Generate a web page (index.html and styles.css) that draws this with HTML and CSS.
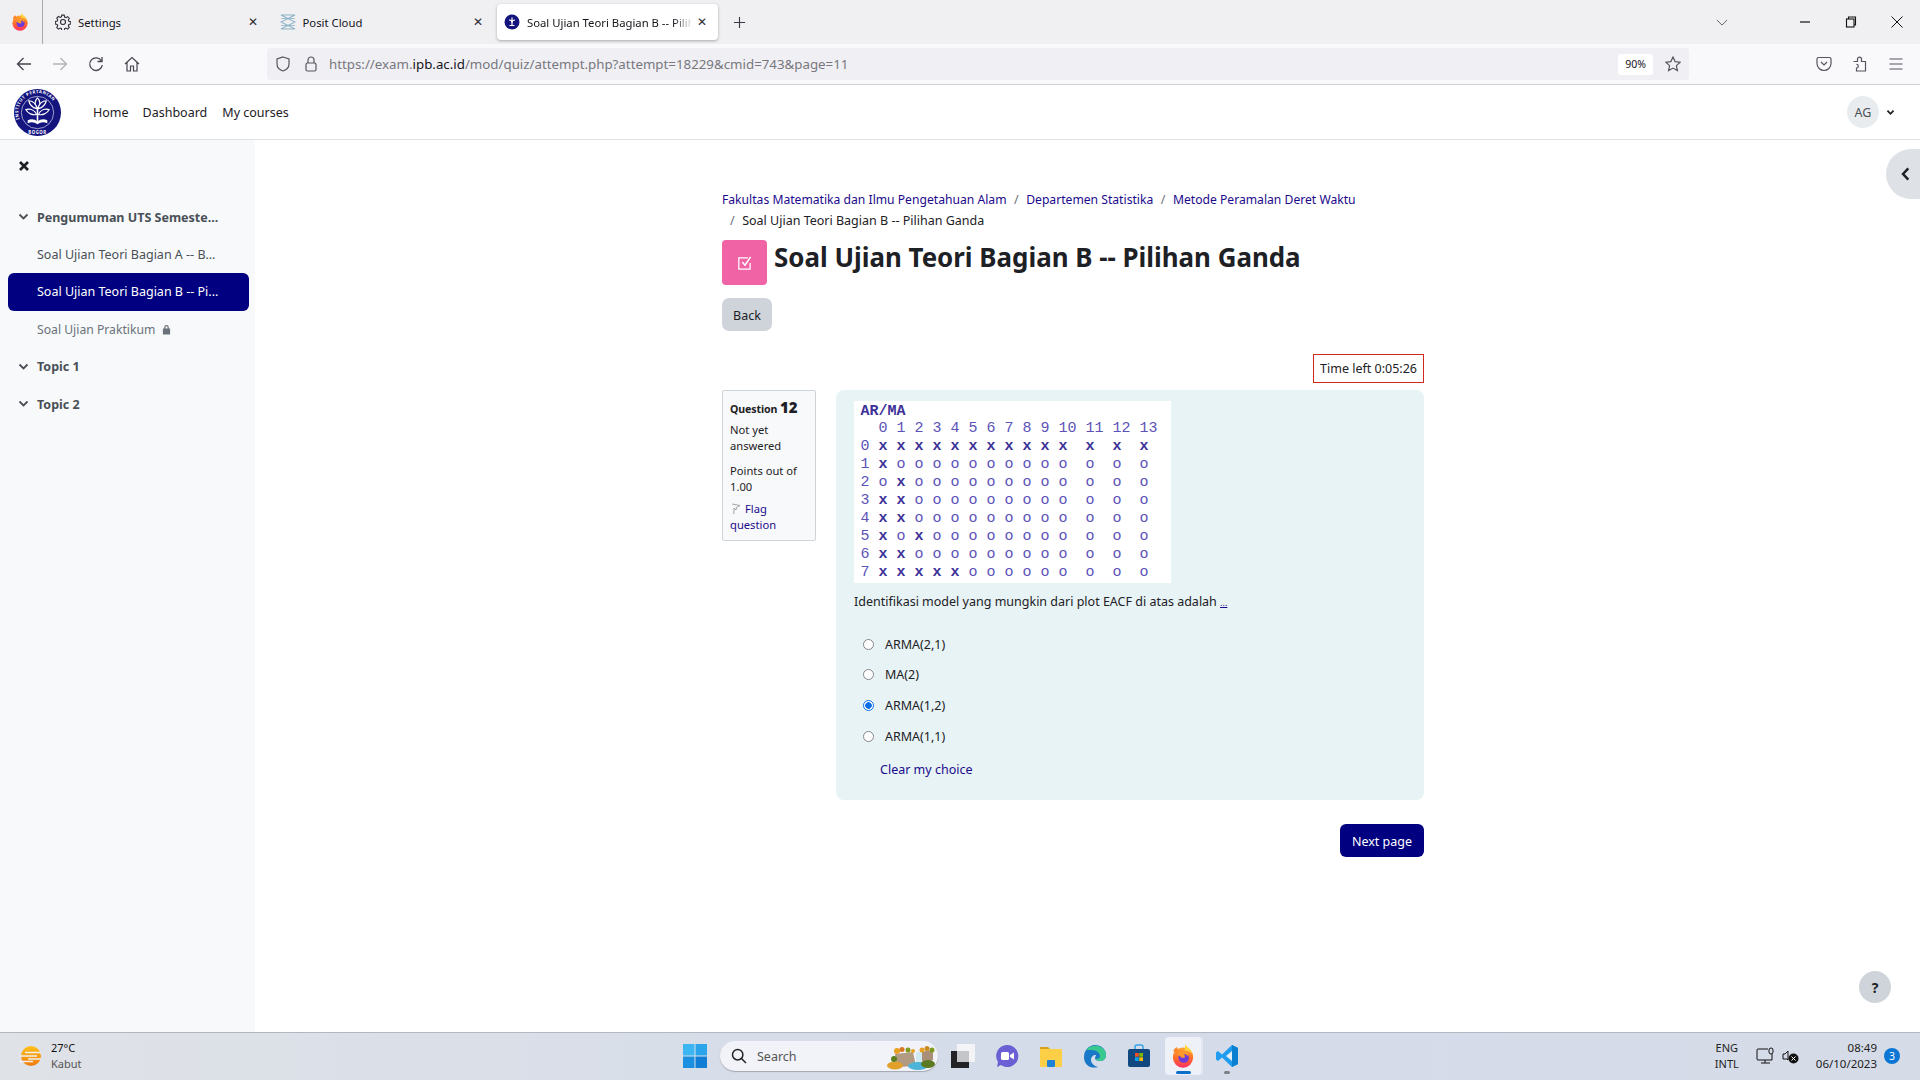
FILE: index.html
```html
<!DOCTYPE html>
<html lang="en">
<head>
<meta charset="utf-8">
<title>Soal Ujian Teori Bagian B -- Pilihan Ganda</title>
<link rel="stylesheet" href="styles.css">
</head>
<body>
<svg class="defs" aria-hidden="true">
  <defs>
    <linearGradient id="ffg" x1="0" y1="0" x2="0" y2="1"><stop offset="0" stop-color="#ffa930"/><stop offset=".55" stop-color="#ff6a2c"/><stop offset="1" stop-color="#ff2f63"/></linearGradient>
    <linearGradient id="sung" x1="0" y1="0" x2="0" y2="1"><stop offset="0" stop-color="#ffc21a"/><stop offset="1" stop-color="#ee7a0c"/></linearGradient>
    <symbol id="fox" viewBox="0 0 32 32">
      <path d="M19 0c1 4 5 5 7 8 3 4 4 8 3 12-3-5-6-8-11-9z" fill="#ffd23c"/>
      <circle cx="16" cy="18" r="13.500" fill="url(#ffg)"/>
      <path d="M19 1c1 3 4 5 6 7 2 2 3 4 4 6-3-4-7-5-11-5z" fill="#ffd23c"/>
      <circle cx="17" cy="18" r="7" fill="#6f3bd8"/>
      <path d="M9 14c2-3 6-5 10-4 3 1 5 4 4 7-1-3-4-4-6-3 2 1 2 3 1 4-2 1-6 0-6-2-1 0-2-1-3-2z" fill="#ff9a2c"/>
      <path d="M3 9c1-2 3-4 5-5 0 2 1 3 3 4-2 1-3 3-2 5-3 0-5-2-6-4z" fill="#ff8a2c"/>
    </symbol>
  </defs>
</svg>

<div class="tabstrip">
  <svg class="ff-small"><use href="#fox"/></svg>
  <div class="tab-sep"></div>
  <div class="tab">
    <svg class="tab-ico" viewBox="0 0 16 16" fill="none" stroke="#2b2a33" stroke-width="1.100"><path d="M6.700 1h2.600l.4 2 1.400.6 1.800-1.100 1.800 1.800-1.100 1.800.6 1.400 2 .4v2.600l-2 .4-.6 1.400 1.100 1.800-1.800 1.800-1.800-1.100-1.400.6-.4 2H6.700l-.4-2-1.400-.6-1.800 1.100-1.800-1.800 1.100-1.800-.6-1.400-2-.4V7.700l2-.4.6-1.400-1.100-1.800 1.800-1.800 1.800 1.100 1.400-.6z" transform="translate(.5 .2) scale(.94)"/><circle cx="8" cy="8" r="2.500"/></svg>
    <span class="tab-label">Settings</span><span class="tab-x">✕</span>
  </div>
  <div class="tab">
    <svg class="tab-ico" viewBox="0 0 16 16" fill="none" stroke="#8fb2c9" stroke-width="1.100"><path d="M1 1h14L1 8l14 7H1l14-7z"/><path d="M1 4.500h14M1 11.500h14" stroke-width=".8"/></svg>
    <span class="tab-label">Posit Cloud</span><span class="tab-x">✕</span>
  </div>
  <div class="tab tab-active">
    <svg class="tab-ico" viewBox="0 0 16 16"><circle cx="8" cy="8" r="7.500" fill="#14147f"/><path d="M8 3.500v8M5 6c2 0 3 1.500 3 3 0-1.500 1-3 3-3M5.500 11.500h5" stroke="#fff" stroke-width="1.200" fill="none"/></svg>
    <span class="tab-label tab-fade">Soal Ujian Teori Bagian B -- Pilihan Ganda</span><span class="tab-x">✕</span>
  </div>
  <svg class="plus" viewBox="0 0 14 14" stroke="#3a3944" stroke-width="1.200"><path d="M7 1v12M1 7h12"/></svg>
  <svg class="tablist" viewBox="0 0 14 8" fill="none" stroke="#5b5b66" stroke-width="1.100"><path d="M1 1l6 6 6-6"/></svg>
  <div class="winctl">
    <svg viewBox="0 0 12 12" stroke="#111" stroke-width="1.200"><path d="M1 6h10"/></svg>
    <svg viewBox="0 0 12 12" fill="none" stroke="#111" stroke-width="1.100"><rect x="1.500" y="3" width="7.500" height="8"/><path d="M3.500 3V1h7v8H9"/></svg>
    <svg viewBox="0 0 12 12" stroke="#111" stroke-width="1"><path d="M.5.500l11 11M11.500.500l-11 11"/></svg>
  </div>
</div>

<div class="toolbar">
  <div class="tool"><svg viewBox="0 0 16 16" fill="none" stroke="#45454f" stroke-width="1.300"><path d="M15 8H1.500M7.500 2l-6 6 6 6"/></svg></div>
  <div class="tool"><svg viewBox="0 0 16 16" fill="none" stroke="#b3b3b8" stroke-width="1.300"><path d="M1 8h13.500M8.500 2l6 6-6 6"/></svg></div>
  <div class="tool"><svg viewBox="0 0 16 16" fill="none" stroke="#45454f" stroke-width="1.300"><path d="M13.500 5A6.300 6.300 0 1 0 14.300 9M14 1v4.500H9.500"/></svg></div>
  <div class="tool"><svg viewBox="0 0 16 16" fill="none" stroke="#45454f" stroke-width="1.200"><path d="M1 8l7-6.500L15 8M3 6.500V15h3.500v-5h3v5H13V6.500"/></svg></div>
  <div class="urlbar">
    <svg class="url-ico" viewBox="0 0 16 16" fill="none" stroke="#55555f" stroke-width="1.200"><path d="M8 1l6 2v5c0 3.500-3 6-6 7-3-1-6-3.500-6-7V3z"/></svg>
    <svg class="url-ico" viewBox="0 0 16 16" fill="none" stroke="#55555f" stroke-width="1.200"><rect x="3" y="7" width="10" height="8" rx="1.500"/><path d="M5 7V4a3 3 0 0 1 6 0v3"/></svg>
    <div class="url"><span class="url-dim">https://exam.</span>ipb.ac.id<span class="url-dim">/mod/quiz/attempt.php?attempt=18229&amp;cmid=743&amp;page=11</span></div>
    <div class="zoomchip">90%</div>
    <svg class="star" viewBox="0 0 16 16" fill="none" stroke="#55555f" stroke-width="1.200"><path d="M8 1l2.100 4.600 5 .6-3.700 3.400 1 5L8 12.100 3.600 14.600l1-5L.9 6.200l5-.6z"/></svg>
  </div>
  <div class="tools-right">
    <svg viewBox="0 0 16 16" fill="none" stroke="#55555f" stroke-width="1.200"><path d="M2.500 1.500h11A1.500 1.500 0 0 1 15 3v4.500c0 4-3.300 7-7 7s-7-3-7-7V3a1.500 1.500 0 0 1 1.500-1.500z"/><path d="M5 6l3 3 3-3"/></svg>
    <svg viewBox="0 0 16 16" fill="none" stroke="#55555f" stroke-width="1.200"><path d="M1.500 5.500h4V3.200a2 2 0 1 1 4 0v2.300h4v9.500h-9v-3a1.800 1.800 0 1 0 0-3.600"/></svg>
    <svg viewBox="0 0 16 16" fill="none" stroke="#55555f" stroke-width="1.200"><path d="M1.500 3h13M1.500 8h13M1.500 13h13"/></svg>
  </div>
</div>

<nav class="navbar">
  <svg class="logo" viewBox="0 0 48 48">
    <circle cx="24" cy="24" r="24" fill="#14147f"/>
    <circle cx="24" cy="24" r="16.500" fill="none" stroke="#fff" stroke-width=".6"/>
    <g fill="#14147f" stroke="#fff" stroke-width="1.200" stroke-linejoin="round">
      <path d="M24 9c-3 3-3 7 0 10.500 3-3.500 3-7.500 0-10.500z"/>
      <path d="M23 20c-4-1-7-4-8-8 4 0 8 3 8 8z"/>
      <path d="M25 20c4-1 7-4 8-8-4 0-8 3-8 8z"/>
      <path d="M23 26c-4 1-9-1-11-5 4-1 9 0 11 5z"/>
      <path d="M25 26c4 1 9-1 11-5-4-1-9 0-11 5z"/>
    </g>
    <path d="M24 19v14" stroke="#fff" stroke-width="1.600"/>
    <path d="M14 32c4-2 7-1 10 1 3-2 6-3 10-1v3c-4-2-7-1-10 1-3-2-6-3-10-1z" fill="#fff"/>
    <path id="ringpath" d="M6.500 33A19.700 19.700 0 1 1 41.500 33" fill="none"/>
    <text class="logo-ring"><textPath href="#ringpath" startOffset="3%">INSTITUT PERTANIAN</textPath></text>
    <text class="logo-ring" x="24" y="46" text-anchor="middle">BOGOR</text>
  </svg>
  <a class="navlink">Home</a>
  <a class="navlink">Dashboard</a>
  <a class="navlink nav-last">My courses</a>
  <div class="user">
    <div class="avatar">AG</div>
    <svg class="caret" viewBox="0 0 10 8" fill="none" stroke="#1d2125" stroke-width="2"><path d="M1.500 1.800L5 5.500l3.500-3.700"/></svg>
  </div>
</nav>

<div class="main">
  <aside class="sidebar">
    <div class="closerow"><svg class="close-ico" viewBox="0 0 10 10" stroke="#1d2125" stroke-width="2.600"><path d="M1 1l8 8M9 1l-8 8"/></svg></div>
    <div class="side-row side-head"><svg class="chev" viewBox="0 0 10 8" fill="none" stroke="#495057" stroke-width="1.800"><path d="M1 1.500L5 5.500l4-4"/></svg>Pengumuman UTS Semeste...</div>
    <div class="side-row side-item">Soal Ujian Teori Bagian A -- B...</div>
    <div class="side-row side-item side-active">Soal Ujian Teori Bagian B -- Pi...</div>
    <div class="side-row side-item side-muted">Soal Ujian Praktikum<svg class="lock" viewBox="0 0 10 12"><path d="M2.500 5V3.500a2.500 2.500 0 0 1 5 0V5H9v6.500H1V5zM3.800 5h2.400V3.500a1.200 1.200 0 0 0-2.400 0z" fill="#6a737b" fill-rule="evenodd"/></svg></div>
    <div class="side-row side-head"><svg class="chev" viewBox="0 0 10 8" fill="none" stroke="#495057" stroke-width="1.800"><path d="M1 1.500L5 5.500l4-4"/></svg>Topic 1</div>
    <div class="side-row side-head"><svg class="chev" viewBox="0 0 10 8" fill="none" stroke="#495057" stroke-width="1.800"><path d="M1 1.500L5 5.500l4-4"/></svg>Topic 2</div>
  </aside>

  <main class="content">
    <div class="crumbs">
      <a>Fakultas Matematika dan Ilmu Pengetahuan Alam</a><span class="sep">/</span><a>Departemen Statistika</a><span class="sep">/</span><a>Metode Peramalan Deret Waktu</a><br>
      <span class="sep sep-first">/</span>Soal Ujian Teori Bagian B -- Pilihan Ganda
    </div>
    <div class="titlerow">
      <div class="quiz-ico"><svg viewBox="0 0 16 16" fill="none" stroke="#fff" stroke-width="1.100"><path d="M12.500 8v5.500h-10v-10h8"/><path d="M5.500 7l2.500 3 5-7.500" stroke-width="1.300"/></svg></div>
      <h1>Soal Ujian Teori Bagian B -- Pilihan Ganda</h1>
    </div>
    <div class="backbtn">Back</div>
    <div class="timerrow"><div class="timer">Time left 0:05:26</div></div>
    <div class="question">
      <div class="qinfo">
        <div class="qno">Question <b>12</b></div>
        <p>Not yet answered</p>
        <p>Points out of 1.00</p>
        <p class="flag"><svg class="flag-ico" viewBox="0 0 10 12" fill="none" stroke="#8a8f94" stroke-width=".8"><path d="M1 1l8 1.500L5.500 4.500 5 7 3 5 2.800 11"/></svg><a>Flag question</a></p>
      </div>
      <div class="qbody">
        <div class="eacf">
          <div class="eacf-row"><b>AR/MA</b></div>
          <div class="eacf-row">  0 1 2 3 4 5 6 7 8 9 10 11 12 13</div>
          <div class="eacf-row">0 <b>x x x x x x x x x x x  x  x  x</b></div>
          <div class="eacf-row">1 <b>x</b> o o o o o o o o o o  o  o  o</div>
          <div class="eacf-row">2 o <b>x</b> o o o o o o o o o  o  o  o</div>
          <div class="eacf-row">3 <b>x x</b> o o o o o o o o o  o  o  o</div>
          <div class="eacf-row">4 <b>x x</b> o o o o o o o o o  o  o  o</div>
          <div class="eacf-row">5 <b>x</b> o <b>x</b> o o o o o o o o  o  o  o</div>
          <div class="eacf-row">6 <b>x x</b> o o o o o o o o o  o  o  o</div>
          <div class="eacf-row">7 <b>x x x x x</b> o o o o o o  o  o  o</div>
        </div>
        <div class="qtext">Identifikasi model yang mungkin dari plot EACF di atas adalah <a class="dots">...</a></div>
        <div class="answers">
          <div class="ans"><span class="radio"></span>ARMA(2,1)</div>
          <div class="ans"><span class="radio"></span>MA(2)</div>
          <div class="ans"><span class="radio radio-on"></span>ARMA(1,2)</div>
          <div class="ans"><span class="radio"></span>ARMA(1,1)</div>
        </div>
        <a class="clear">Clear my choice</a>
      </div>
    </div>
    <div class="nextrow"><div class="nextbtn">Next page</div></div>
  </main>

  <div class="drawer"><svg viewBox="0 0 8 12" fill="none" stroke="#1d2125" stroke-width="2.200"><path d="M6.500 1L1.800 6l4.700 5"/></svg></div>
  <div class="help">?</div>
</div>

<footer class="taskbar">
  <div class="weather">
    <svg class="sun" viewBox="0 0 24 24"><circle cx="12" cy="12" r="10" fill="url(#sung)"/><path d="M6 8.500h16M1 12h17M9 15h13M0 17.500h14" stroke="#eef0f3" stroke-width="1.300"/></svg>
    <div class="wtext"><div>27°C</div><div class="wsub">Kabut</div></div>
  </div>
  <div class="center">
    <svg class="win" viewBox="0 0 24 24"><rect width="11.500" height="11.500" fill="#3bb6f2"/><rect x="12.500" width="11.500" height="11.500" fill="#2aa5ec"/><rect y="12.500" width="11.500" height="11.500" fill="#1b8fe0"/><rect x="12.500" y="12.500" width="11.500" height="11.500" fill="#0f7ed4"/></svg>
    <div class="search">
      <svg class="search-ico" viewBox="0 0 16 16" fill="none" stroke="#222" stroke-width="1.500"><circle cx="6.700" cy="6.700" r="5.200"/><path d="M10.500 10.500l4.500 4.500"/></svg>
      <span>Search</span>
      <svg class="search-art" viewBox="0 0 50 24">
        <path d="M8 8l18-2 3 14-19 1z" fill="#b39a83"/>
        <path d="M33 6l13-2v10l-10 4z" fill="#a98f78"/>
        <rect x="29" y="6" width="6" height="11" fill="#cfeaf0"/>
        <ellipse cx="31" cy="20" rx="10" ry="4" fill="#4cb4d8"/>
        <ellipse cx="8" cy="19.500" rx="8" ry="4" fill="#e0a02a"/>
        <circle cx="7" cy="13" r="3" fill="#5b7f20"/>
        <ellipse cx="41" cy="18" rx="7" ry="4" fill="#5c7a22"/>
        <circle cx="10" cy="5" r="3" fill="#e8a020"/><circle cx="15" cy="3.500" r="2.500" fill="#d9781f"/><circle cx="21" cy="4" r="2.500" fill="#7f9a1f"/><circle cx="26" cy="5" r="2" fill="#e8a020"/>
        <circle cx="35" cy="4" r="2.500" fill="#e8a020"/><circle cx="40" cy="2.500" r="2.500" fill="#c88a1c"/><circle cx="45" cy="4" r="2.500" fill="#7f9a1f"/>
      </svg>
    </div>
    <div class="slot"><svg viewBox="0 0 24 24"><rect x="6" width="18" height="18" fill="#f4f4f6"/><rect y="7" width="18" height="18" fill="#232325"/><rect x="6" y="7" width="12" height="11" fill="#c3c5c9"/></svg></div>
    <div class="slot"><svg viewBox="0 0 24 24"><path d="M12 1a11 11 0 1 1-6 20l-4 2 1-5A11 11 0 0 1 12 1z" fill="#6a5fd3"/><rect x="6" y="8" width="8" height="8" rx="1.500" fill="#fff"/><path d="M15 11l4-2.500v7L15 13z" fill="#fff"/></svg></div>
    <div class="slot"><svg viewBox="0 0 24 24"><path d="M1 3h8l2 2h-10z" fill="#d9a01a"/><rect x="1" y="5" width="22" height="18" rx="1" fill="#fdcf47"/><rect x="8" y="16" width="8" height="7" rx="1" fill="#1f82d6"/></svg></div>
    <div class="slot"><svg viewBox="0 0 24 24"><path d="M12 1c6 0 11 4 11 10 0 4-3 6-6 6-3 0-5-1-5-3 0-1 1-2 1-3-3 0-5 2-5 5s3 6 7 7c-6 2-14-1-14-10C1 6 6 1 12 1z" fill="#1a78c8"/><path d="M3 6c3-4 8-5 12-4 5 1 8 5 8 9 0 4-3 6-6 6-2 0-4-1-5-2 2 0 5 0 5-3 0-3-4-6-8-6-3 0-5 0-6 0z" fill="#37c98e"/></svg></div>
    <div class="slot"><svg viewBox="0 0 24 24"><path d="M8 5V3a2 2 0 0 1 2-2h4a2 2 0 0 1 2 2v2" fill="none" stroke="#35a4e6" stroke-width="1.500"/><rect x="1" y="5" width="22" height="18" rx="2" fill="#10487f"/><rect x="8" y="9" width="3.700" height="3.700" fill="#f25022"/><rect x="12.300" y="9" width="3.700" height="3.700" fill="#7fba00"/><rect x="8" y="13.300" width="3.700" height="3.700" fill="#00a4ef"/><rect x="12.300" y="13.300" width="3.700" height="3.700" fill="#ffb900"/></svg></div>
    <div class="slot slot-active"><svg><use href="#fox"/></svg><span class="run-bar"></span></div>
    <div class="slot"><svg viewBox="0 0 24 24"><path d="M17 1l6 3v16l-6 3-10-9.500L3 17l-2-1.500V8.500L3 7l4 3.500z" fill="#1f9cf0"/><path d="M17 7l-6 5 6 5z" fill="#e7edf5"/><path d="M17 1l6 3v16l-6 3z" fill="#0b7fd0"/></svg><span class="run-dot"></span></div>
  </div>
  <div class="tray">
    <div class="lang">ENG<br>INTL</div>
    <svg class="tray-ico" viewBox="0 0 18 18" fill="none" stroke="#111" stroke-width="1"><path d="M12 2H2a1 1 0 0 0-1 1v9a1 1 0 0 0 1 1h14v-6M9 13v3M5 16h9"/><rect x="13" y="1" width="4" height="6" rx="2"/></svg>
    <svg class="tray-ico" viewBox="0 0 18 18"><path d="M1 7h2l3-3v9l-1-1H1z" fill="none" stroke="#111"/><circle cx="11.500" cy="11.500" r="5" fill="#111"/><path d="M9.500 9.500l4 4M13.500 9.500l-4 4" stroke="#fff" stroke-width="1"/></svg>
    <div class="clock">08:49<br>06/10/2023</div>
    <div class="badge">3</div>
  </div>
</footer>
</body>
</html>
```
FILE: styles.css
```css
* { box-sizing: border-box; }
html, body { margin: 0; height: 100%; }
body {
  width: 1920px; height: 1080px; overflow: hidden;
  display: flex; flex-direction: column;
  font-family: "Noto Sans", sans-serif; font-size: 12.5px; color: #1d2125; background: #fff;
}
svg { display: block; flex: none; }
.defs { width: 0; height: 0; overflow: hidden; }
a { color: #1c0a8c; }

/* browser chrome */
.tabstrip { height: 44px; flex: none; background: #f0f0f2; display: flex; align-items: center; padding-left: 11px; color: #15141a; }
.ff-small { width: 18px; height: 18px; }
.tab-sep { width: 1px; height: 44px; background: #a8a8ac; margin: 0 5px 0 13px; }
.tab { width: 221px; height: 36px; margin-right: 3.5px; display: flex; align-items: center; padding-left: 7px; padding-right: 9px; border-radius: 4px; font-size: 11.3px; }
.tab-active { background: #fff; box-shadow: 0 1px 3px rgba(0,0,0,.3); }
.tab-ico { width: 16px; height: 16px; margin-right: 7px; }
.tab-label { flex: 1; white-space: nowrap; overflow: hidden; }
.tab-fade { margin-right: 4px; -webkit-mask-image: linear-gradient(90deg,#000 88%,transparent); mask-image: linear-gradient(90deg,#000 88%,transparent); }
.tab-x { font-size: 12px; width: 12px; line-height: 12px; color: #2b2a33; }
.plus { width: 13px; height: 13px; margin-left: 11px; }
.tablist { width: 12px; height: 7px; margin-left: 970px; }
.winctl { margin-left: 71px; display: flex; gap: 34px; }
.winctl svg { width: 12px; height: 12px; }

.toolbar { height: 41px; flex: none; background: #f9f9fb; border-bottom: 1px solid #cfcfd2; display: flex; align-items: center; padding-left: 6px; }
.tool { width: 36px; display: flex; justify-content: center; }
.tool svg { width: 16px; height: 16px; }
.urlbar { margin-left: 117px; width: 1422px; height: 32px; background: #f0f0f4; border-radius: 4px; display: flex; align-items: center; padding-left: 8px; }
.url-ico { width: 16px; height: 16px; margin-right: 12px; }
.url-ico + .url-ico { margin-right: 10px; }
.url { flex: 1; font-size: 13.3px; color: #15141a; white-space: nowrap; }
.url-dim { color: #77777e; }
.zoomchip { width: 35px; height: 21px; background: #fff; border-radius: 3px; font-size: 10.5px; display: flex; align-items: center; justify-content: center; color: #15141a; }
.star { width: 16px; height: 16px; margin: 0 8px 0 12px; }
.tools-right { display: flex; gap: 20px; margin-left: 127px; }
.tools-right svg { width: 16px; height: 16px; }

/* moodle nav */
.navbar { height: 55px; flex: none; border-bottom: 1px solid #dee2e6; display: flex; align-items: center; padding-left: 14px; background: #fff; }
.logo { width: 47px; height: 47px; margin-right: 32px; }
.logo-ring { font-size: 4.400px; font-weight: 700; fill: #fff; font-family: "Noto Sans", sans-serif; letter-spacing: .55px; }
.navlink { color: #1d2125; margin-right: 14px; }
.nav-last { margin-left: 1px; }
.user { margin-left: auto; display: flex; align-items: center; padding-right: 25px; gap: 7px; }
.avatar { width: 32px; height: 32px; border-radius: 50%; background: #e9ecef; display: flex; align-items: center; justify-content: center; color: #495057; }
.caret { width: 9px; height: 7px; }

/* main */
.main { flex: 1; display: flex; position: relative; min-height: 0; }
.sidebar { width: 255px; flex: none; background: #f8f9fa; padding: 0 6px 0 8px; }
.closerow { height: 58.500px; padding: 21px 0 0 11px; }
.close-ico { width: 10px; height: 10px; }
.side-row { height: 37.400px; display: flex; align-items: center; border-radius: 6px; padding-left: 29px; white-space: nowrap; color: #495057; }
.side-head { font-weight: 700; padding-left: 10px; }
.chev { width: 11px; height: 8px; margin-right: 8px; }
.side-active { background: #000080; color: #fff; }
.side-muted { color: #6a737b; font-size: 12.200px; }
.lock { width: 9px; height: 11px; margin-left: 7px; }

.content { flex: none; width: 702px; margin-left: 467px; padding-top: 49px; }
.crumbs { line-height: 21px; height: 42px; white-space: nowrap; }
.crumbs a { font-size: 12.150px; }
.sep { color: #6a737b; margin: 0 7.500px; }
.sep-first { margin-left: 8px; }
.titlerow { display: flex; margin-top: 9px; height: 45px; gap: 7px; }
.quiz-ico { width: 45px; height: 45px; background: #f064a6; border-radius: 4px; display: flex; align-items: center; justify-content: center; }
.quiz-ico svg { width: 18px; height: 18px; }
h1 { margin: 0; font-size: 25.900px; line-height: 34px; font-weight: 700; white-space: nowrap; }
.backbtn { margin-top: 13px; width: 50px; height: 33px; padding-top: 1px; background: #ced4da; border-radius: 7px; display: flex; align-items: center; justify-content: center; }
.timerrow { display: flex; justify-content: flex-end; margin-top: 23px; }
.timer { width: 111px; height: 29px; border: 1px solid #d0281c; display: flex; align-items: center; justify-content: center; }
.question { display: flex; gap: 20px; margin-top: 7px; align-items: flex-start; }
.qinfo { width: 94px; height: 151px; flex: none; background: #f8f9fa; border: 1px solid #ced4da; border-radius: 2px; padding: 7px 7px; font-size: 11.200px; line-height: 16px; }
.qno { font-weight: 700; font-size: 10.600px; letter-spacing: -.1px; line-height: 18px; margin-bottom: 4px; }
.qno b { font-size: 15px; letter-spacing: 0; }
.qinfo p { margin: 0 0 9px; }
.qinfo .flag { margin-top: -3px; }
.flag a { color: #1c0a8c; }
.flag-ico { display: inline-block; width: 10px; height: 12px; margin: 0 4px 0 1px; vertical-align: -2px; }
.qbody { flex: 1; height: 410px; background: #e7f3f5; border-radius: 8px; padding: 11px 0 0 18px; }
.eacf { width: 317px; height: 182px; background: #fff; color: #5c52b8; font-family: "Liberation Mono", monospace; font-size: 15px; padding: 1.500px 0 0 6.500px; overflow: hidden; }
.eacf-row { height: 17.900px; line-height: 17.900px; white-space: pre; }
.eacf b { color: #3d3199; }
.qtext { margin-top: 9px; line-height: 20px; white-space: nowrap; }
.dots { font-size: 9px; text-decoration: underline; }
.answers { margin-top: 16px; }
.ans { height: 30.600px; display: flex; align-items: center; padding-left: 9px; }
.radio { width: 11px; height: 11px; border-radius: 50%; border: 1px solid #85858c; background: #fff; margin-right: 11px; }
.radio-on { border: 1.500px solid #0d6ee8; background: radial-gradient(circle,#0d6ee8 3px,#fff 3.500px); }
.clear { display: block; margin: 9px 0 0 26px; line-height: 20px; }
.nextrow { display: flex; justify-content: flex-end; margin-top: 24px; }
.nextbtn { width: 84px; height: 33px; padding-top: 1px; background: #000080; color: #fff; border-radius: 6px; display: flex; align-items: center; justify-content: center; }

.drawer { position: absolute; right: 0; top: 9px; width: 34px; height: 50px; padding-left: 5px; background: #dee2e6; border-radius: 25px 0 0 25px; display: flex; align-items: center; justify-content: center; }
.drawer svg { width: 9px; height: 14px; }
.help { position: absolute; left: 1859px; top: 831px; width: 32px; height: 32px; border-radius: 50%; background: #ced4da; display: flex; align-items: center; justify-content: center; font-weight: 700; font-size: 14px; }

/* windows taskbar */
.taskbar { height: 48px; flex: none; display: grid; grid-template-columns: 683px auto 1fr; align-items: center; padding-bottom: 1px; background: linear-gradient(90deg,#dfe2e7,#d5dce9 50%,#d6dbe8); border-top: 1px solid #b3b7c0; }
.weather { display: flex; align-items: center; padding-left: 19px; gap: 8px; font-size: 11px; line-height: 16px; color: #111; }
.sun { width: 24px; height: 24px; }
.wsub { color: #555; }
.center { display: flex; align-items: center; }
.win { width: 24px; height: 24px; margin-right: 13px; }
.search { width: 218px; height: 30px; border-radius: 15px; background: #f1f3f8; box-shadow: 0 1px 1px rgba(0,0,0,.25); display: flex; align-items: center; padding-left: 11px; color: #555; font-size: 12.500px; position: relative; }
.search-ico { width: 16px; height: 16px; margin-right: 10px; }
.search-art { position: absolute; right: 1px; top: 5px; width: 50px; height: 24px; }
.slot { width: 44px; height: 38px; position: relative; display: flex; align-items: center; justify-content: center; }
.search + .slot { margin-left: 3px; }
.slot svg { width: 24px; height: 24px; }
.slot-active { background: #eef1f7; border-radius: 4px; box-shadow: 2px 0 0 #e4e8f0; width: 36px; margin: 0 4px; }
.run-bar { position: absolute; bottom: 1px; left: 11px; width: 15px; height: 3px; background: #0a6fc8; border-radius: 2px; }
.run-dot { position: absolute; bottom: 1px; left: 19px; width: 6px; height: 3px; background: #7c8088; border-radius: 2px; }
.tray { display: flex; align-items: center; justify-content: flex-end; font-size: 11px; line-height: 16px; color: #222; padding-right: 20px; }
.lang { text-align: center; margin-right: 17px; }
.tray-ico { width: 18px; height: 18px; margin-right: 8px; }
.clock { text-align: right; margin: 0 7px 0 8px; font-size: 11.500px; }
.badge { width: 16px; height: 16px; border-radius: 50%; background: #0b76d4; color: #fff; font-size: 10px; display: flex; align-items: center; justify-content: center; }
```
